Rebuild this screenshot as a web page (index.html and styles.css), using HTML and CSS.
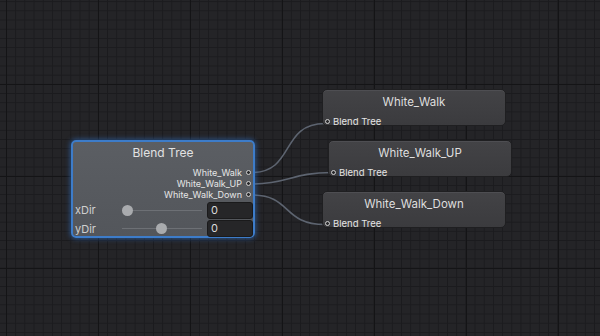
FILE: index.html
```html
<!DOCTYPE html>
<html>
<head>
<meta charset="utf-8">
<link rel="stylesheet" href="styles.css">
</head>
<body>
<div class="canvas">
  <svg class="wires" width="600" height="336" viewBox="0 0 600 336">
    <path d="M252,172.5 C295,172.5 280,123.5 325,123.5"/>
    <path d="M252,184 C288,184 292,172.5 332,172.5"/>
    <path d="M252,195 C292,195 282,224.5 325,224.5"/>
  </svg>

  <div class="node blend" style="left:71px;top:140px">
    <div class="title">Blend Tree</div>
    <div class="outputs">
      <div class="out">White_Walk<span class="port"></span></div>
      <div class="out">White_Walk_UP<span class="port"></span></div>
      <div class="out">White_Walk_Down<span class="port"></span></div>
    </div>
    <div class="param">
      <span class="plabel">xDir</span>
      <div class="slider"><span class="knob" style="left:0px"></span></div>
      <div class="field">0</div>
    </div>
    <div class="param">
      <span class="plabel">yDir</span>
      <div class="slider"><span class="knob" style="left:34px"></span></div>
      <div class="field">0</div>
    </div>
  </div>

  <div class="node state" style="left:322px;top:89px">
    <div class="stitle">White_Walk</div>
    <div class="inport"><span class="port"></span>Blend Tree</div>
  </div>
  <div class="node state" style="left:328px;top:140px">
    <div class="stitle">White_Walk_UP</div>
    <div class="inport"><span class="port"></span>Blend Tree</div>
  </div>
  <div class="node state" style="left:322px;top:191px">
    <div class="stitle">White_Walk_Down</div>
    <div class="inport"><span class="port"></span>Blend Tree</div>
  </div>
</div>
</body>
</html>
```

FILE: styles.css
```css
html, body {
  margin: 0;
  padding: 0;
  background: #222225;
}
.canvas {
  position: relative;
  width: 600px;
  height: 336px;
  overflow: hidden;
  font-family: Inter, "Noto Sans", sans-serif;
  background-color: #242427;
  background-image:
    linear-gradient(to right, #141416 1px, transparent 1px),
    linear-gradient(to bottom, #141416 1px, transparent 1px),
    linear-gradient(to right, #1b1b1e 1px, transparent 1px),
    linear-gradient(to bottom, #1b1b1e 1px, transparent 1px);
  background-size: 92px 92px, 92px 92px, 9.2px 9.2px, 9.2px 9.2px;
  background-position: 6px 0, 0 84px, 6px 0, 0 1.2px;
}
.wires {
  position: absolute;
  left: 0;
  top: 0;
}
.wires path {
  fill: none;
  stroke: #5d6470;
  stroke-width: 1.6;
}
.node {
  position: absolute;
  box-sizing: border-box;
  border-radius: 5px;
}
.blend {
  width: 184px;
  height: 98px;
  border: 2px solid #3d7cc9;
  background: linear-gradient(#5b5e63, #53565b);
  box-shadow: 0 0 5px 1px rgba(52, 120, 210, 0.55);
  display: flex;
  flex-direction: column;
  color: #dcdcdc;
}
.title {
  font-size: 12px;
  line-height: 14px;
  text-align: center;
  padding-top: 4px;
  margin-bottom: 7px;
  color: #e2e2e2;
}
.outputs {
  display: flex;
  flex-direction: column;
  align-items: flex-end;
  padding-right: 2px;
}
.out {
  height: 11px;
  line-height: 11px;
  font-size: 9px;
  display: flex;
  align-items: center;
  gap: 4px;
  color: #e6e6e6;
}
.port {
  width: 3px;
  height: 3px;
  border-radius: 50%;
  border: 1px solid #d0d0d0;
  background: #2a2a2c;
  flex: none;
}
.param {
  display: flex;
  align-items: center;
  height: 17px;
  margin-top: 1.5px;
}
.plabel {
  width: 49px;
  padding-left: 2px;
  box-sizing: border-box;
  font-size: 11px;
  color: #cfcfcf;
}
.slider {
  position: relative;
  width: 80px;
  height: 1px;
  background: #6d7075;
  margin-right: 5px;
}
.knob {
  position: absolute;
  top: -5px;
  width: 11px;
  height: 11px;
  border-radius: 50%;
  background: #a9abae;
}
.field {
  box-sizing: border-box;
  width: 46px;
  height: 17px;
  background: #262628;
  border: 1px solid #1a1a1b;
  border-radius: 3px;
  font-size: 11px;
  line-height: 15px;
  padding-left: 3px;
  color: #dadada;
}
.state {
  width: 184px;
  height: 37px;
  background: linear-gradient(#434346, #3b3b3e);
  border: 1px solid #1f1f21;
  box-shadow: inset 0 1px 0 #4e4e52;
  display: flex;
  flex-direction: column;
}
.stitle {
  font-size: 11.5px;
  line-height: 14px;
  text-align: center;
  padding-top: 5px;
  color: #dedede;
}
.inport {
  display: flex;
  align-items: center;
  gap: 3px;
  margin-top: 7px;
  padding-left: 2px;
  font-size: 9.5px;
  line-height: 11px;
  color: #e4e4e4;
}
```
